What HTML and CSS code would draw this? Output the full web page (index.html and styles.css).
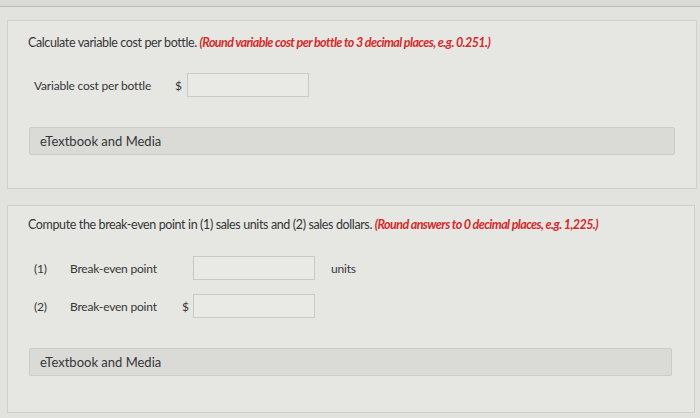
FILE: index.html
```html
<!DOCTYPE html>
<html>
<head>
    <title>Break-even</title>
    <link rel="stylesheet" href="styles.css">
</head>
<body>
    <div class="top-strip"></div>

    <div class="card card-first">
        <p class="question">Calculate variable cost per bottle. <span class="hint">(Round variable cost per bottle to 3 decimal places, e.g. 0.251.)</span></p>

        <div class="row row-single">
            <span class="label">Variable cost per bottle</span>
            <span class="currency">$</span>
            <div class="answer"></div>
        </div>

        <div class="media-bar">eTextbook and Media</div>
    </div>

    <div class="card card-second">
        <p class="question">Compute the break-even point in (1) sales units and (2) sales dollars. <span class="hint">(Round answers to 0 decimal places, e.g. 1,225.)</span></p>

        <div class="row row-numbered">
            <span class="num">(1)</span>
            <span class="label">Break-even point</span>
            <span class="currency"></span>
            <div class="answer"></div>
            <span class="unit">units</span>
        </div>

        <div class="row row-numbered second-row">
            <span class="num">(2)</span>
            <span class="label">Break-even point</span>
            <span class="currency">$</span>
            <div class="answer"></div>
        </div>

        <div class="media-bar media-bar-last">eTextbook and Media</div>
    </div>
</body>
</html>
```

FILE: styles.css
```css
body {
    margin: 0;
    padding: 0;
    background: #e2e2df;
    font-family: Lato, "Open Sans", sans-serif;
    color: #363636;
    height: 418px;
    overflow: hidden;
}

.top-strip {
    height: 6px;
    background: #dadad7;
    border-bottom: 1px solid #b9b9b6;
}

.card {
    background: #e6e6e3;
    border: 1px solid #cfcfcc;
    margin-left: 7px;
    box-sizing: border-box;
}

.card-first {
    margin-top: 13px;
    margin-right: 3px;
    height: 169px;
    padding: 14px 21px 0 20px;
}

.card-second {
    margin-top: 16px;
    margin-right: 5px;
    height: 208px;
    padding: 11px 22px 0 20px;
}

.question {
    margin: 0;
    font-size: 12.5px;
    line-height: 16px;
    letter-spacing: -0.38px;
}

.hint {
    color: #d22b2b;
    font-weight: bold;
    font-style: italic;
    letter-spacing: -0.58px;
}

.row {
    display: flex;
    align-items: center;
    font-size: 12px;
    letter-spacing: -0.2px;
}

.row-single {
    margin-top: 22px;
    padding-left: 6px;
}

.row-single .label {
    width: 141px;
}

.row-single .currency {
    width: 12px;
}

.answer {
    width: 120px;
    height: 22px;
    background: #e9e9e6;
    border: 1px solid #c9c9c6;
}

.row-numbered {
    padding-left: 6px;
    margin-top: 23px;
}

.second-row {
    margin-top: 14px;
}

.num {
    width: 36px;
}

.row-numbered .label {
    width: 112px;
}

.row-numbered .currency {
    width: 11px;
}

.unit {
    margin-left: 16px;
}

.media-bar {
    margin-top: 30px;
    margin-left: 1px;
    height: 28px;
    box-sizing: border-box;
    background: #dadad7;
    border: 1px solid #cbcbc8;
    border-radius: 2px;
    font-size: 13px;
    line-height: 26px;
    padding-left: 10px;
}

.media-bar-last {
    margin-top: 30px;
}
```
